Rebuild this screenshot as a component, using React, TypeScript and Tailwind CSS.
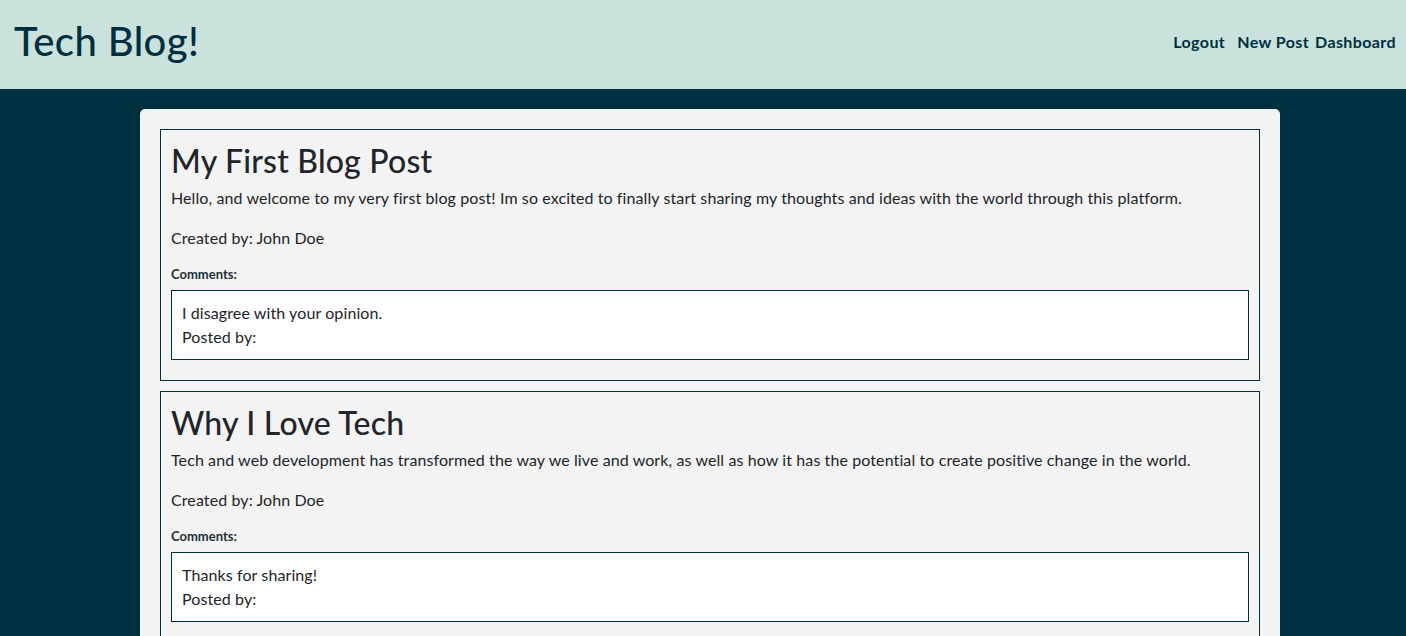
import React from 'react';

const posts = [
  {
    title: 'My First Blog Post',
    body: 'Hello, and welcome to my very first blog post! Im so excited to finally start sharing my thoughts and ideas with the world through this platform.',
    author: 'John Doe',
    comments: [{ text: 'I disagree with your opinion.', by: '' }],
  },
  {
    title: 'Why I Love Tech',
    body: 'Tech and web development has transformed the way we live and work, as well as how it has the potential to create positive change in the world.',
    author: 'John Doe',
    comments: [{ text: 'Thanks for sharing!', by: '' }],
  },
];

export default function App() {
  return (
    <div
      className="min-h-screen bg-[#002f3f] text-[#212529]"
      style={{ fontFamily: 'Lato, "Noto Sans", sans-serif' }}
    >
      {/* Header */}
      <header className="h-[89px] bg-[#c9e3dc] flex items-center justify-between pl-[14px] pr-[10px] text-[#002f3f]">
        <h1 className="text-[40px] leading-[48px] font-medium tracking-[0.4px] pb-[8px]">Tech Blog!</h1>
        <nav className="flex items-center gap-[12px] text-[16px] font-bold tracking-[0.4px] pb-[6px]">
          <a href="#">Logout</a>
          <div className="flex gap-[6px]">
            <a href="#">New Post</a>
            <a href="#">Dashboard</a>
          </div>
        </nav>
      </header>

      {/* Posts */}
      <div className="pl-[14px]">
        <main className="w-[1140px] mx-auto mt-[20px] bg-[#f3f3f3] rounded-[5px] p-[20px] flex flex-col gap-[10px]">
          {posts.map((post) => (
            <article key={post.title} className="border border-[#002f3f] p-[10px]">
              <h2 className="text-[32px] leading-[38px] font-medium tracking-[0.2px] pt-[2px] mb-[6px]">{post.title}</h2>
              <p className="text-[16px] leading-[24px] tracking-[0.1px] mb-[16px]">{post.body}</p>
              <p className="text-[16px] leading-[24px] tracking-[0.1px] mb-[16px]">Created by: {post.author}</p>
              <h6 className="text-[13px] leading-[16px] font-bold text-[#1d2f38] mb-[8px]">Comments:</h6>
              {post.comments.map((c, i) => (
                <div key={i} className="bg-white border border-[#002f3f] p-[10px] mb-[10px] text-[16px] leading-[24px] tracking-[0.1px]">
                  <div>{c.text}</div>
                  <div>Posted by: {c.by}</div>
                </div>
              ))}
            </article>
          ))}
        </main>
      </div>
    </div>
  );
}
